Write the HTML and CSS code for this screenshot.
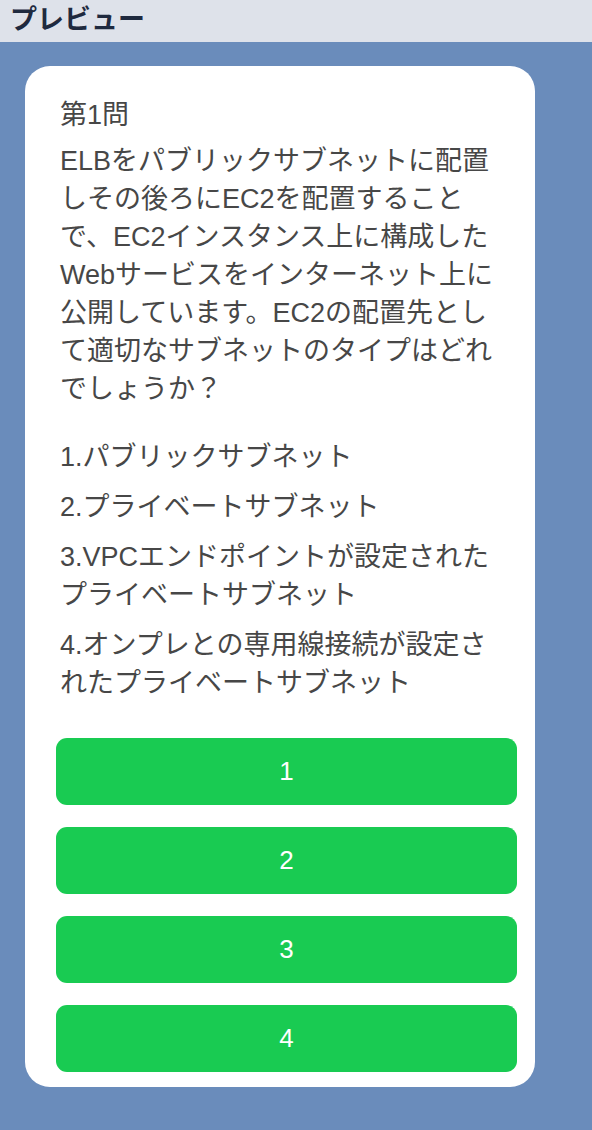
FILE: index.html
```html
<!DOCTYPE html>
<html lang="ja">
<head>
    <meta charset="UTF-8">
    <meta name="viewport" content="width=device-width, initial-scale=1.0">
    <title>プレビュー</title>
    <link rel="stylesheet" href="styles.css">
</head>
<body>
    <!-- Header -->
    <div class="header">プレビュー</div>

    <div class="preview-area">
        <div class="card">
            <div class="quiz-title">第1問</div>
            <div class="question">ELBをパブリックサブネットに配置しその後ろにEC2を配置することで、EC2インスタンス上に構成したWebサービスをインターネット上に公開しています。EC2の配置先として適切なサブネットのタイプはどれでしょうか？</div>

            <div class="choices">
                <div class="choice">1.パブリックサブネット</div>
                <div class="choice">2.プライベートサブネット</div>
                <div class="choice">3.VPCエンドポイントが設定されたプライベートサブネット</div>
                <div class="choice">4.オンプレとの専用線接続が設定されたプライベートサブネット</div>
            </div>

            <div class="answer-buttons">
                <button>1</button>
                <button>2</button>
                <button>3</button>
                <button>4</button>
            </div>
        </div>
    </div>
</body>
</html>
```

FILE: styles.css
```css
body {
    margin: 0;
    font-family: "Liberation Sans", "Noto Sans CJK JP", sans-serif;
    background-color: #6a8cbb;
}

/* Header */
.header {
    height: 42px;
    line-height: 40px;
    padding-left: 10px;
    background-color: #dee2ea;
    color: #1f2a3f;
    font-size: 27px;
    font-weight: bold;
}

/* Preview */
.preview-area {
    padding: 24px 57px 43px 25px;
}
.card {
    background-color: #fff;
    border-radius: 25px;
    padding: 30px 18px 15px 31px;
    color: #474747;
    font-size: 27px;
    line-height: 38px;
}
.quiz-title {
    padding-left: 4px;
    margin-bottom: 8px;
}
.question {
    padding: 0 12px 0 4px;
}
.choices {
    margin-top: 30px;
    padding: 0 12px 0 4px;
    display: flex;
    flex-direction: column;
    gap: 12px;
}
.answer-buttons {
    margin-top: 36px;
    display: flex;
    flex-direction: column;
    gap: 22px;
}
.answer-buttons button {
    height: 67px;
    border: none;
    border-radius: 11px;
    background-color: #19cb52;
    color: #fff;
    font-family: "Liberation Sans", sans-serif;
    font-size: 26px;
    cursor: pointer;
}
```
